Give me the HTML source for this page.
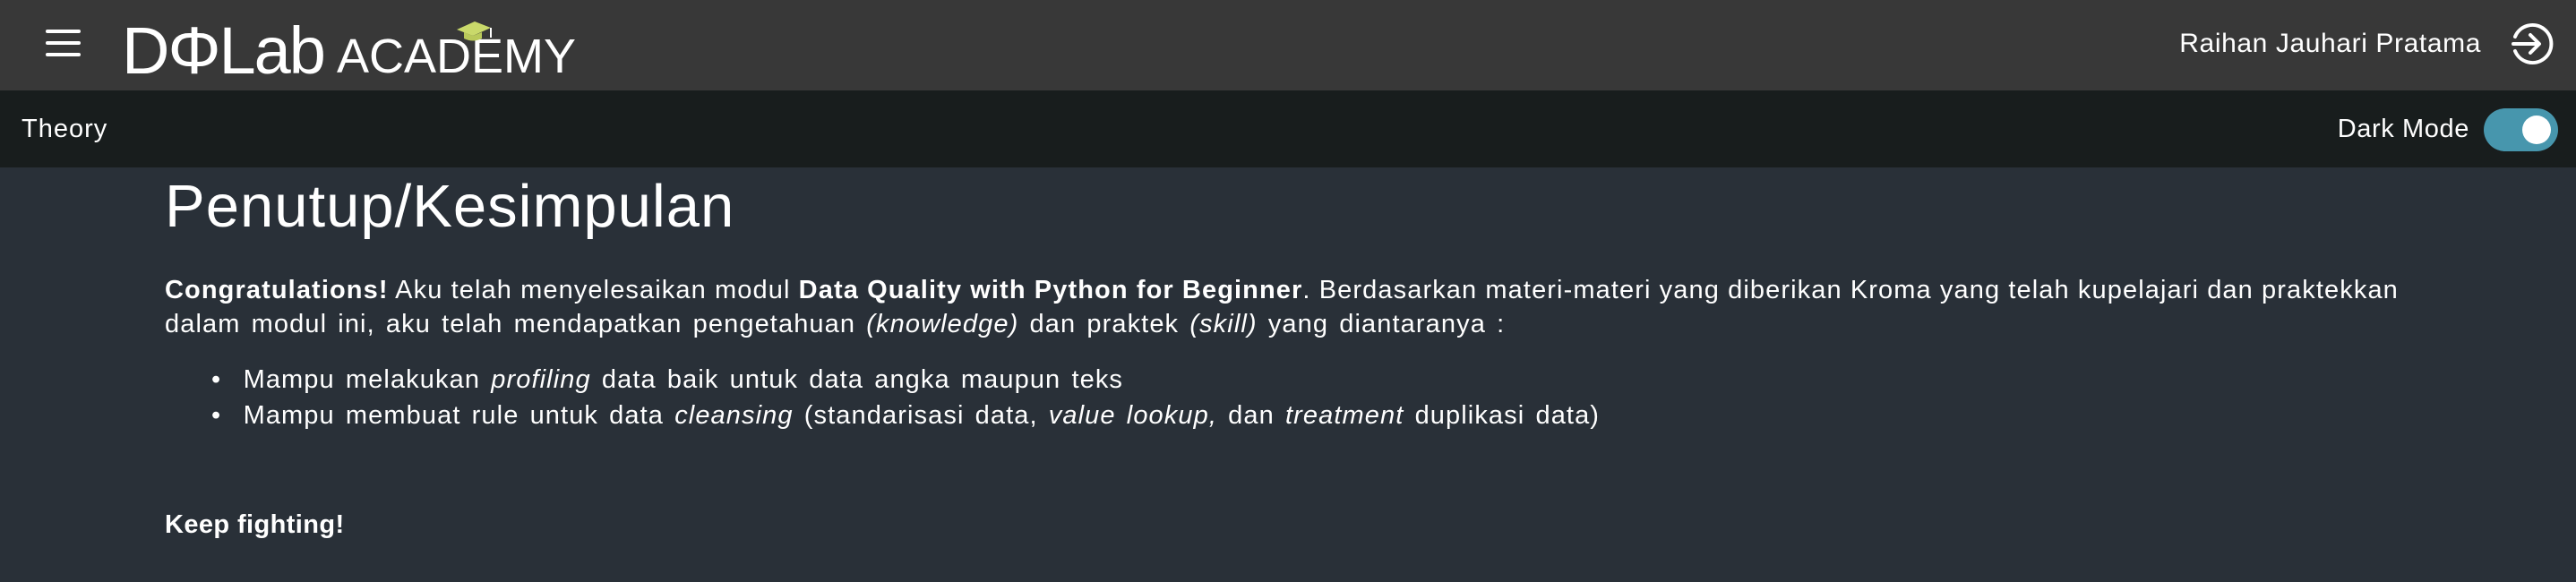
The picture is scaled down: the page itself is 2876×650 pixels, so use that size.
<!DOCTYPE html>
<html><head><meta charset="utf-8"><style>
*{margin:0;padding:0;box-sizing:border-box}
body{width:2876px;height:650px;background:#293038;color:#fff;font-family:"Liberation Sans",sans-serif;overflow:hidden;position:relative}
.hdr{position:absolute;left:0;top:0;width:2876px;height:101px;background:#383838}
.sub{position:absolute;left:0;top:101px;width:2876px;height:86px;background:#181d1d}
.abs{position:absolute;white-space:nowrap}
.ham span{position:absolute;left:0;width:39px;height:4px;background:#fff;border-radius:2px}
.t{font-size:29px;letter-spacing:1.1px}
b{font-weight:bold}
</style></head><body>
<div class="hdr"></div>
<div class="sub"></div>
<div class="abs ham" style="left:51px;top:33px;width:39px;height:30px">
<span style="top:0"></span><span style="top:13px"></span><span style="top:26px"></span></div>
<div class="abs" style="left:136px;top:20px;font-size:74px;line-height:74px;letter-spacing:-2px">DΦLab</div>
<div class="abs" style="left:376px;top:38px;font-size:54px;line-height:50px;letter-spacing:0px">ACADEMY</div>
<svg class="abs" style="left:508px;top:22px" width="44" height="26" viewBox="0 0 44 26"><polygon points="2,11 22,2 40,9 20,18" fill="#c9d96a"/><path d="M10,14 L10,21 Q20,26 30,21 L30,14 L20,18 Z" fill="#b9c95a"/><line x1="40" y1="9" x2="40" y2="20" stroke="#fff" stroke-width="2"/></svg>
<div class="abs" style="right:106px;top:31px;font-size:30px;line-height:36px;letter-spacing:0.6px">Raihan Jauhari Pratama</div>
<svg class="abs" style="left:2801px;top:24px" width="50" height="50" viewBox="0 0 50 50" fill="none" stroke="#fff" stroke-width="4" stroke-linecap="round" stroke-linejoin="round"><path d="M7,17 A21,21 0 1 1 7,33"/><path d="M5,25 H33 M24,15 L34,25 L24,35"/></svg>
<div class="abs" style="left:24px;top:126px;font-size:29px;line-height:36px;letter-spacing:1px">Theory</div>
<div class="abs" style="right:119px;top:126px;font-size:29px;line-height:36px;letter-spacing:0.6px">Dark Mode</div>
<div class="abs" style="left:2773px;top:121px;width:83px;height:48px;border-radius:24px;background:#4796ad"><div style="position:absolute;right:8px;top:8px;width:32px;height:32px;border-radius:50%;background:#fff"></div></div>
<div class="abs" style="left:184px;top:191px;font-size:67px;line-height:80px;letter-spacing:1px">Penutup/Kesimpulan</div>
<div class="abs t" style="left:184px;top:305px;line-height:38px"><b>Congratulations!</b> Aku telah menyelesaikan modul <b>Data Quality with Python for Beginner</b>. Berdasarkan materi-materi yang diberikan Kroma yang telah kupelajari dan praktekkan</div>
<div class="abs t" style="left:184px;top:343px;line-height:38px;word-spacing:3px">dalam modul ini, aku telah mendapatkan pengetahuan <i>(knowledge)</i> dan praktek <i>(skill)</i> yang diantaranya :</div>
<div class="abs t" style="left:236px;top:405px;line-height:38px;word-spacing:3px">•&nbsp; Mampu melakukan <i>profiling</i> data baik untuk data angka maupun teks</div>
<div class="abs t" style="left:236px;top:445px;line-height:38px;word-spacing:3px">•&nbsp; Mampu membuat rule untuk data <i>cleansing</i> (standarisasi data, <i>value lookup,</i> dan <i>treatment</i> duplikasi data)</div>
<div class="abs t" style="left:184px;top:567px;line-height:38px;letter-spacing:0.4px"><b>Keep fighting!</b></div>
</body></html>
